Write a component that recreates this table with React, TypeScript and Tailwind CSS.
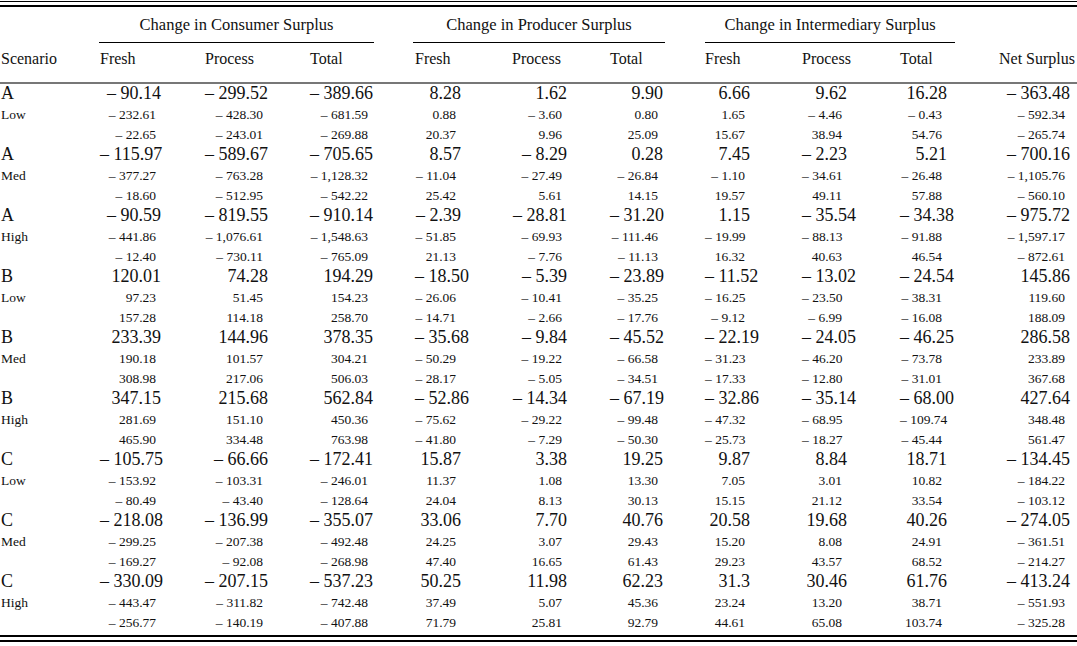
import React from "react";

const GRID =
  "grid grid-cols-[100px_105px_105px_105px_97px_98px_95px_97px_98px_75px_1fr]";

const bigPr = [
  "",
  "pr-[44px]",
  "pr-[42px]",
  "pr-[42px]",
  "pr-[51px]",
  "pr-[43px]",
  "pr-[42px]",
  "pr-[52px]",
  "pr-[53px]",
  "pr-[28px]",
  "pr-[7px]",
];
const smallPr = [
  "",
  "pr-[49px]",
  "pr-[47px]",
  "pr-[47px]",
  "pr-[56px]",
  "pr-[48px]",
  "pr-[47px]",
  "pr-[57px]",
  "pr-[58px]",
  "pr-[33px]",
  "pr-[12px]",
];

type Group = {
  s: string;
  lvl: string;
  rows: [string[], string[], string[]];
};

const g = (s: string, lvl: string, a: string, b: string, c: string): Group => ({
  s,
  lvl,
  rows: [a.split(" "), b.split(" "), c.split(" ")],
});

const data: Group[] = [
  g(
    "A",
    "Low",
    "-90.14 -299.52 -389.66 8.28 1.62 9.90 6.66 9.62 16.28 -363.48",
    "-232.61 -428.30 -681.59 0.88 -3.60 0.80 1.65 -4.46 -0.43 -592.34",
    "-22.65 -243.01 -269.88 20.37 9.96 25.09 15.67 38.94 54.76 -265.74"
  ),
  g(
    "A",
    "Med",
    "-115.97 -589.67 -705.65 8.57 -8.29 0.28 7.45 -2.23 5.21 -700.16",
    "-377.27 -763.28 -1,128.32 -11.04 -27.49 -26.84 -1.10 -34.61 -26.48 -1,105.76",
    "-18.60 -512.95 -542.22 25.42 5.61 14.15 19.57 49.11 57.88 -560.10"
  ),
  g(
    "A",
    "High",
    "-90.59 -819.55 -910.14 -2.39 -28.81 -31.20 1.15 -35.54 -34.38 -975.72",
    "-441.86 -1,076.61 -1,548.63 -51.85 -69.93 -111.46 -19.99 -88.13 -91.88 -1,597.17",
    "-12.40 -730.11 -765.09 21.13 -7.76 -11.13 16.32 40.63 46.54 -872.61"
  ),
  g(
    "B",
    "Low",
    "120.01 74.28 194.29 -18.50 -5.39 -23.89 -11.52 -13.02 -24.54 145.86",
    "97.23 51.45 154.23 -26.06 -10.41 -35.25 -16.25 -23.50 -38.31 119.60",
    "157.28 114.18 258.70 -14.71 -2.66 -17.76 -9.12 -6.99 -16.08 188.09"
  ),
  g(
    "B",
    "Med",
    "233.39 144.96 378.35 -35.68 -9.84 -45.52 -22.19 -24.05 -46.25 286.58",
    "190.18 101.57 304.21 -50.29 -19.22 -66.58 -31.23 -46.20 -73.78 233.89",
    "308.98 217.06 506.03 -28.17 -5.05 -34.51 -17.33 -12.80 -31.01 367.68"
  ),
  g(
    "B",
    "High",
    "347.15 215.68 562.84 -52.86 -14.34 -67.19 -32.86 -35.14 -68.00 427.64",
    "281.69 151.10 450.36 -75.62 -29.22 -99.48 -47.32 -68.95 -109.74 348.48",
    "465.90 334.48 763.98 -41.80 -7.29 -50.30 -25.73 -18.27 -45.44 561.47"
  ),
  g(
    "C",
    "Low",
    "-105.75 -66.66 -172.41 15.87 3.38 19.25 9.87 8.84 18.71 -134.45",
    "-153.92 -103.31 -246.01 11.37 1.08 13.30 7.05 3.01 10.82 -184.22",
    "-80.49 -43.40 -128.64 24.04 8.13 30.13 15.15 21.12 33.54 -103.12"
  ),
  g(
    "C",
    "Med",
    "-218.08 -136.99 -355.07 33.06 7.70 40.76 20.58 19.68 40.26 -274.05",
    "-299.25 -207.38 -492.48 24.25 3.07 29.43 15.20 8.08 24.91 -361.51",
    "-169.27 -92.08 -268.98 47.40 16.65 61.43 29.23 43.57 68.52 -214.27"
  ),
  g(
    "C",
    "High",
    "-330.09 -207.15 -537.23 50.25 11.98 62.23 31.3 30.46 61.76 -413.24",
    "-443.47 -311.82 -742.48 37.49 5.07 45.36 23.24 13.20 38.71 -551.93",
    "-256.77 -140.19 -407.88 71.79 25.81 92.79 44.61 65.08 103.74 -325.28"
  ),
];

const fmt = (v: string) => (v.startsWith("-") ? "\u2013 " + v.slice(1) : v);

function GroupRows({ grp }: { grp: Group }) {
  return (
    <div>
      <div className={`${GRID} h-[21px] text-[18px] leading-[19px]`}>
        <div className="pl-[1px]">{grp.s}</div>
        {grp.rows[0].map((v, i) => (
          <div key={i} className={`text-right whitespace-nowrap ${bigPr[i + 1]}`}>
            {fmt(v)}
          </div>
        ))}
      </div>
      {[1, 2].map((r) => (
        <div key={r} className={`${GRID} h-[20px] text-[13.5px] leading-[20px]`}>
          <div className="pl-[1px]">{r === 1 ? grp.lvl : ""}</div>
          {grp.rows[r].map((v, i) => (
            <div key={i} className={`text-right whitespace-nowrap ${smallPr[i + 1]}`}>
              {fmt(v)}
            </div>
          ))}
        </div>
      ))}
    </div>
  );
}

export default function App() {
  return (
    <div
      className="w-[1077px] h-[646px] bg-white text-[#111] overflow-hidden"
      style={{ fontFamily: '"Liberation Serif", "Times New Roman", serif' }}
    >
      <div className="mt-[1px] h-[1px] bg-black" />
      <div className="mt-[3px] h-[2px] bg-black" />

      {/* group headers */}
      <div className={`${GRID} pt-[8px] text-[16.5px] leading-[20px]`}>
        <div />
        <div className="col-span-3 flex flex-col">
          <div className="text-center whitespace-nowrap ml-[-1px] mr-[41px]">
            Change in Consumer Surplus
          </div>
          <div className="mt-[7px] ml-[-1px] mr-[41px] h-[1px] bg-black" />
        </div>
        <div className="col-span-3 flex flex-col">
          <div className="text-center whitespace-nowrap ml-[-2px] mr-[40px]">
            Change in Producer Surplus
          </div>
          <div className="mt-[7px] ml-[-2px] mr-[40px] h-[1px] bg-black" />
        </div>
        <div className="col-span-3 flex flex-col">
          <div className="text-center whitespace-nowrap mr-[20px]">
            Change in Intermediary Surplus
          </div>
          <div className="mt-[7px] mr-[20px] h-[1px] bg-black" />
        </div>
        <div />
      </div>

      {/* column headers */}
      <div className={`${GRID} mt-[6px] text-[16px] leading-[20px]`}>
        <div className="pl-[1px]">Scenario</div>
        <div>Fresh</div>
        <div>Process</div>
        <div>Total</div>
        <div>Fresh</div>
        <div>Process</div>
        <div>Total</div>
        <div>Fresh</div>
        <div>Process</div>
        <div>Total</div>
        <div className="text-right pr-[2px] whitespace-nowrap">Net Surplus</div>
      </div>
      <div className="mt-[13px] h-[2px] bg-[#777]" />

      <div>
        {data.map((grp, i) => (
          <GroupRows key={i} grp={grp} />
        ))}
      </div>

      <div className="mt-[2px] h-[2px] bg-black" />
      <div className="mt-[3px] h-[2px] bg-black" />
    </div>
  );
}
